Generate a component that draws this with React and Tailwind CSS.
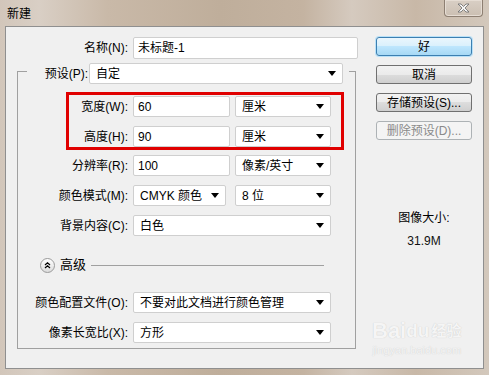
// New document dialog (Photoshop "新建") on a Windows 7 basic frame

const font = "font-['Liberation_Sans','Noto_Sans_CJK_SC',sans-serif]"

function Arrow() {
  return (
    <svg width="8" height="5" viewBox="0 0 8 5" className="shrink-0">
      <path d="M0 0 H8 L4 5 Z" fill="#000" />
    </svg>
  )
}

function Field({ value, w }) {
  return (
    <div className={`h-[21px] ${w} bg-white border border-[#cfcfcf] rounded-[2px] flex items-center pl-[4px] text-[12px] text-black shrink-0`}>
      {value}
    </div>
  )
}

function Select({ value, w }) {
  return (
    <div className={`h-[21px] ${w} bg-white border border-[#cfcfcf] rounded-[2px] flex items-center justify-between pl-[6px] pr-[6px] text-[12px] text-black shrink-0`}>
      <span className="whitespace-nowrap">{value}</span>
      <Arrow />
    </div>
  )
}

function Label({ text, w }) {
  return <div className={`${w} text-right text-[12px] text-black whitespace-nowrap shrink-0`}>{text}</div>
}

function Button({ label, kind }) {
  const styles = {
    default: 'border-[#3c7fb1] bg-[linear-gradient(#eaf6fd,#d9f0fc_50%,#bee6fd_50%,#a7d9f5)] text-black shadow-[0_0_0_1px_#b9e1f8]',
    normal: 'border-[#707070] bg-[linear-gradient(#f2f2f2,#ebebeb_50%,#dddddd_50%,#cfcfcf)] text-black',
    disabled: 'border-[#adb2b5] bg-[#f4f4f4] text-[#8a8a8a]',
  }
  return (
    <div className={`h-[19px] w-[96px] border rounded-[3px] flex items-center justify-center text-[12px] ${styles[kind]}`}>
      {label}
    </div>
  )
}

export default function App() {
  return (
    <div className={`w-[489px] h-[375px] overflow-hidden relative bg-[linear-gradient(90deg,#d2c6ba_0%,#d9cfc5_8%,#c9b9a8_22%,#bfae9b_45%,#c4b3a1_62%,#d5cabf_72%,#c8b8a7_85%,#d3c8bc_100%)] ${font}`}>
      {/* Title bar */}
      <div className="h-[26px] flex items-start justify-between">
        <div className="pl-[7px] pt-[6px] text-[12px] text-black leading-[16px]">新建</div>
        <div className="mr-[6px] w-[39px] h-[17px] border border-t-0 border-[#8d7f72] rounded-b-[4px] bg-[linear-gradient(#d9cfc5,#cbbfb2)] flex items-center justify-center shadow-[inset_0_0_0_1px_#e6ddd4]">
          <svg width="13" height="10" viewBox="0 0 13 10">
            <path d="M1 1 H4 L6.5 3.5 L9 1 H12 L8 5 L12 9 H9 L6.5 6.5 L4 9 H1 L5 5 Z" fill="#f4f4f4" stroke="#6a6a6a" strokeWidth="0.8" strokeLinejoin="round" />
          </svg>
        </div>
      </div>

      {/* Client area */}
      <div className="mx-[5px] h-[343px] border border-[#8f8f8f] bg-[#f0f0f0] relative flex">
        {/* Left column */}
        <div className="w-[352px] flex flex-col">
          <div className="mt-[10px] flex items-center">
            <Label text="名称(N):" w="w-[122px]" />
            <div className="ml-[5px] h-[22px] w-[225px] bg-white border border-[#cfcfcf] rounded-[2px] flex items-center pl-[4px] text-[12px] text-black">未标题-1</div>
          </div>

          {/* Group box header */}
          <div className="mt-[4px] ml-[11px] w-[339px] h-[21px] flex">
            <div className="w-[10px] h-[13px] self-end border-l border-t border-[#a0a0a0]" />
            <div className="w-[61px] flex items-center justify-end">
              <span className="text-[12px] text-black whitespace-nowrap">预设(P):</span>
            </div>
            <div className="ml-[1px]">
              <Select value="自定" w="w-[254px]" />
            </div>
            <div className="ml-[6px] flex-1 h-[13px] self-end border-r border-t border-[#a0a0a0]" />
          </div>

          {/* Group box body */}
          <div className="ml-[11px] w-[339px] border-l border-r border-b border-[#a0a0a0] pt-[8px] pb-[5px] flex flex-col">
            <div className="ml-[48px] w-[278px] h-[58px] border-[3px] border-[#e00000] pt-[1px] flex flex-col gap-[9px]">
              <div className="flex items-center">
                <Label text="宽度(W):" w="w-[59px]" />
                <div className="ml-[5px]"><Field value="60" w="w-[97px]" /></div>
                <div className="ml-[5px]"><Select value="厘米" w="w-[96px]" /></div>
              </div>
              <div className="flex items-center">
                <Label text="高度(H):" w="w-[59px]" />
                <div className="ml-[5px]"><Field value="90" w="w-[97px]" /></div>
                <div className="ml-[5px]"><Select value="厘米" w="w-[96px]" /></div>
              </div>
            </div>

            <div className="mt-[5px] flex items-center">
              <Label text="分辨率(R):" w="w-[110px]" />
              <div className="ml-[5px]"><Field value="100" w="w-[97px]" /></div>
              <div className="ml-[5px]"><Select value="像素/英寸" w="w-[96px]" /></div>
            </div>

            <div className="mt-[9px] flex items-center">
              <Label text="颜色模式(M):" w="w-[110px]" />
              <div className="ml-[5px]"><Select value="CMYK 颜色" w="w-[93px]" /></div>
              <div className="ml-[9px]"><Select value="8 位" w="w-[96px]" /></div>
            </div>

            <div className="mt-[9px] flex items-center">
              <Label text="背景内容(C):" w="w-[110px]" />
              <div className="ml-[5px]"><Select value="白色" w="w-[198px]" /></div>
            </div>

            <div className="mt-[21px] ml-[22px] h-[16px] flex items-center">
              <div className="w-[15px] h-[15px] rounded-full border border-[#9a9a9a] bg-[linear-gradient(#ffffff,#dcdcdc)] flex items-center justify-center">
                <svg width="7" height="7" viewBox="0 0 7 7">
                  <path d="M1 3 L3.5 0.8 L6 3 M1 6 L3.5 3.8 L6 6" fill="none" stroke="#000" strokeWidth="1.2" />
                </svg>
              </div>
              <span className="ml-[5px] text-[13px] text-black">高级</span>
              <div className="ml-[5px] w-[233px] border-t border-[#a0a0a0]" />
            </div>

            <div className="mt-[19px] flex items-center">
              <Label text="颜色配置文件(O):" w="w-[110px]" />
              <div className="ml-[5px]"><Select value="不要对此文档进行颜色管理" w="w-[198px]" /></div>
            </div>

            <div className="mt-[9px] flex items-center">
              <Label text="像素长宽比(X):" w="w-[110px]" />
              <div className="ml-[5px]"><Select value="方形" w="w-[198px]" /></div>
            </div>
          </div>
        </div>

        {/* Right column */}
        <div className="ml-[18px] w-[96px] flex flex-col">
          <div className="mt-[10px]"><Button label="好" kind="default" /></div>
          <div className="mt-[9px]"><Button label="取消" kind="normal" /></div>
          <div className="mt-[9px]"><Button label="存储预设(S)..." kind="normal" /></div>
          <div className="mt-[9px]"><Button label="删除预设(D)..." kind="disabled" /></div>
          <div className="mt-[70px] text-center text-[12px] leading-[16px] text-black">图像大小:</div>
          <div className="mt-[7px] text-center text-[12px] leading-[16px] text-[#111]">31.9M</div>
        </div>

        {/* Watermark */}
        <div className="absolute left-[366px] top-[292px] flex flex-col items-center text-[#f5f5f5] [text-shadow:0_0_1px_#c4c4c4] pointer-events-none">
          <div className="flex items-end text-[22px] font-bold leading-[24px]">
            <span>Bai</span>
            <span className="text-[19px]">du</span>
            <span className="ml-[2px] text-[15px]">经验</span>
          </div>
          <div className="mt-[1px] text-[11px] leading-[12px]">jingyan.baidu.com</div>
        </div>
      </div>
    </div>
  )
}
